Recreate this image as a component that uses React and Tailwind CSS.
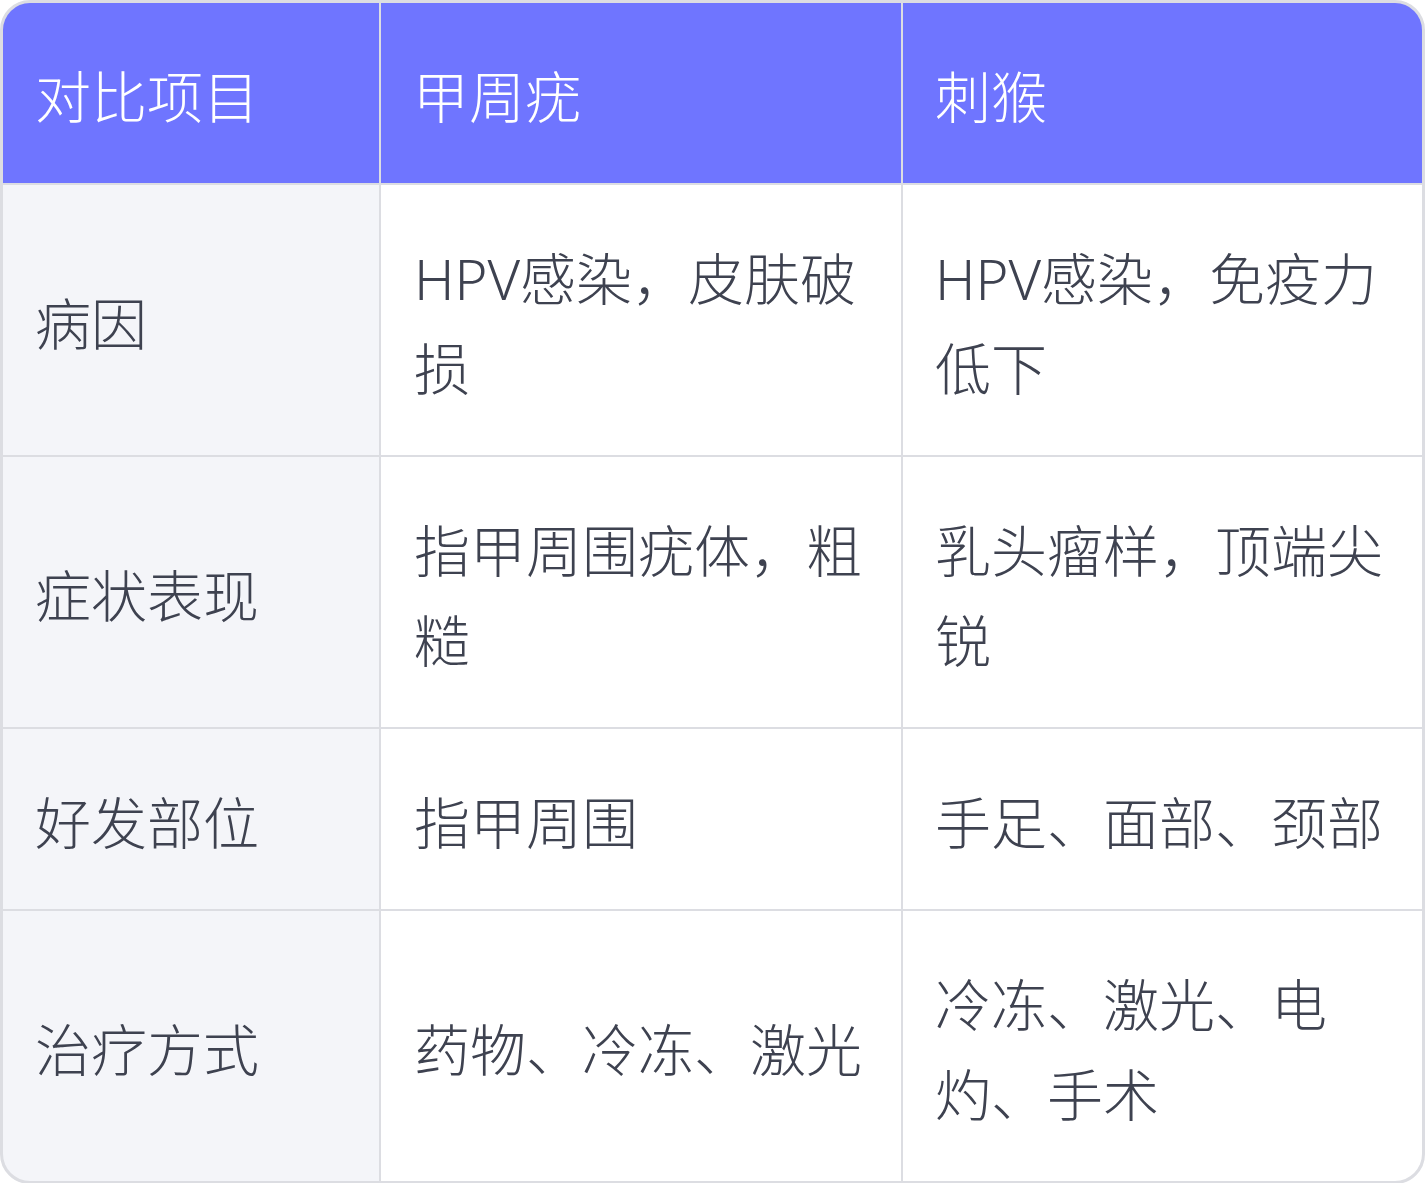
import React from 'react';

const headers = ['对比项目', '甲周疣', '刺猴'];

const rows = [
    ['病因', 'HPV感染，皮肤破损', 'HPV感染，免疫力低下'],
    ['症状表现', '指甲周围疣体，粗糙', '乳头瘤样，顶端尖锐'],
    ['好发部位', '指甲周围', '手足、面部、颈部'],
    ['治疗方式', '药物、冷冻、激光', '冷冻、激光、电灼、手术'],
];

export default function App() {
    return (
        <div className="w-[1425px] h-[1183px] bg-white">
            <div
                className="rounded-[30px] border-[3px] border-[#dcdde2] overflow-hidden bg-[#dcdde2] font-light text-[56px] leading-[90px] text-[#3e4250]"
                style={{ fontFamily: '"Noto Sans", "Noto Sans CJK SC", sans-serif' }}
            >
                <div className="grid grid-cols-[376px_520px_519px] gap-[2px]">
                    {headers.map((h) => (
                        <div key={h} className="bg-[#6f75ff] text-white pl-[32px] pr-[36px] pt-[48px] pb-[42px] flex items-center">
                            {h}
                        </div>
                    ))}
                    {rows.map((row) => (
                        <React.Fragment key={row[0]}>
                            <div className="bg-[#f4f5f9] pl-[32px] pr-[36px] pt-[48px] pb-[42px] flex items-center">{row[0]}</div>
                            <div className="bg-white pl-[33px] pr-[37px] pt-[48px] pb-[42px] flex items-center">{row[1]}</div>
                            <div className="bg-white pl-[32px] pr-[36px] pt-[48px] pb-[42px] flex items-center">{row[2]}</div>
                        </React.Fragment>
                    ))}
                </div>
            </div>
        </div>
    );
}
